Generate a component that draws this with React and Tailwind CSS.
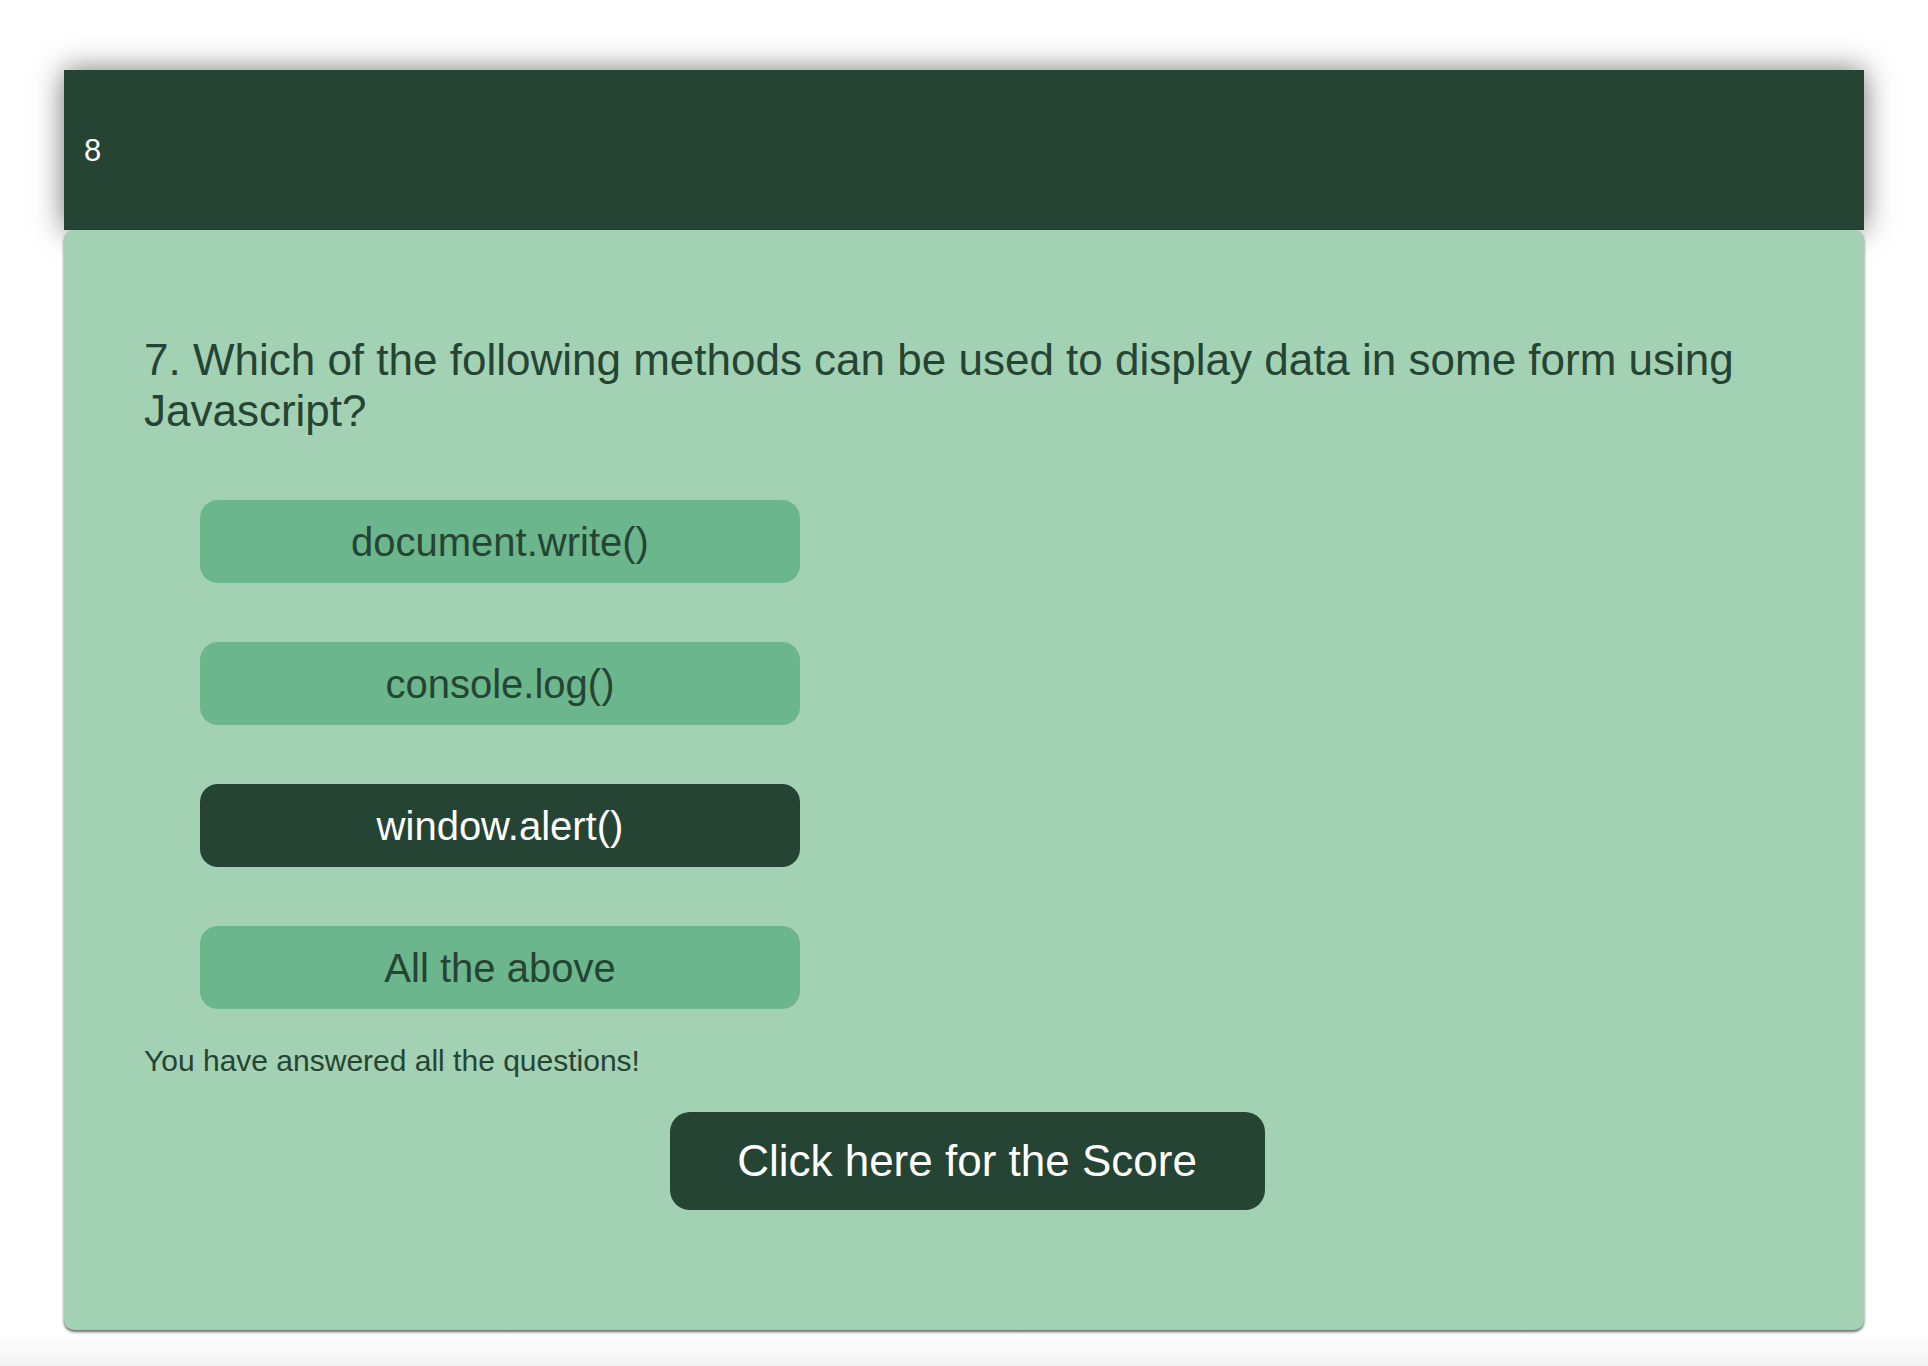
export default function App() {
  const options = [
    { label: "document.write()", selected: false },
    { label: "console.log()", selected: false },
    { label: "window.alert()", selected: true },
    { label: "All the above", selected: false },
  ];
  return (
    <div className="min-h-[1366px] bg-[linear-gradient(to_bottom,#ffffff_1334px,#f2f2f2_1366px)] pt-[70px] font-['Liberation_Sans',Arial,sans-serif]">
      <div className="ml-[64px] w-[1800px]">
        <div className="flex h-[160px] items-center bg-[#264433] pl-[20px] pt-[2px] text-[31px] text-white shadow-[0_0_28px_rgba(0,0,0,0.55)]">
          8
        </div>
        <div className="h-[1100px] rounded-[10px] bg-[#a3d1b4] px-[80px] pt-[105px] shadow-[0_2px_3px_rgba(0,0,0,0.6)]">
          <h2 className="text-[44px] leading-[50.6px] text-[#264433]">
            7. Which of the following methods can be used to display data in some form using Javascript?
          </h2>
          <div className="ml-[56px] mt-[64px] flex flex-col gap-[59px]">
            {options.map((o) => (
              <div
                key={o.label}
                className={
                  o.selected
                    ? "flex h-[83px] w-[600px] items-center justify-center rounded-[18px] bg-[#264433] text-[40px] text-white"
                    : "flex h-[83px] w-[600px] items-center justify-center rounded-[18px] bg-[#6bb68c] text-[40px] text-[#264433]"
                }
              >
                {o.label}
              </div>
            ))}
          </div>
          <p className="mt-[35px] text-[30px] leading-[34.5px] text-[#264433]">
            You have answered all the questions!
          </p>
          <div className="mt-[33px] flex justify-center pl-[6px]">
            <div className="flex h-[98px] w-[595px] items-center justify-center rounded-[20px] bg-[#264433] text-[44px] text-white">
              Click here for the Score
            </div>
          </div>
        </div>
      </div>
    </div>
  );
}
